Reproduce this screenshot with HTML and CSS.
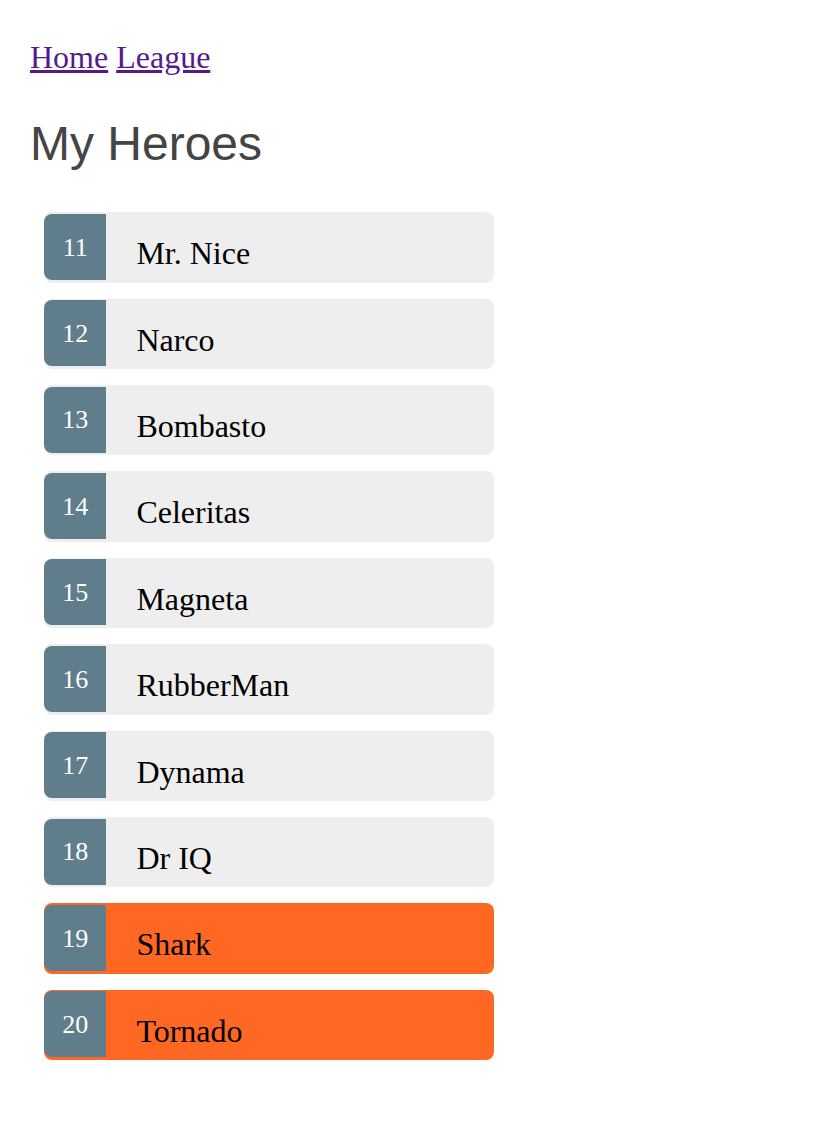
FILE: index.html
```html
<!DOCTYPE html>
<html>
<head>
<meta charset="utf-8">
<title>Tour of Heroes</title>
<link rel="stylesheet" href="styles.css">
</head>
<body>
<nav class="nav"><a class="nav-link" href="#">Home</a> <a class="nav-link" href="#">League</a></nav>
<h2 class="title">My Heroes</h2>
<ul class="heroes">
  <li class="hero"><span class="badge">11</span><span class="name">Mr. Nice</span></li>
  <li class="hero"><span class="badge">12</span><span class="name">Narco</span></li>
  <li class="hero"><span class="badge">13</span><span class="name">Bombasto</span></li>
  <li class="hero"><span class="badge">14</span><span class="name">Celeritas</span></li>
  <li class="hero"><span class="badge">15</span><span class="name">Magneta</span></li>
  <li class="hero"><span class="badge">16</span><span class="name">RubberMan</span></li>
  <li class="hero"><span class="badge">17</span><span class="name">Dynama</span></li>
  <li class="hero"><span class="badge">18</span><span class="name">Dr IQ</span></li>
  <li class="hero hero-active"><span class="badge">19</span><span class="name">Shark</span></li>
  <li class="hero hero-active"><span class="badge">20</span><span class="name">Tornado</span></li>
</ul>
</body>
</html>
```

FILE: styles.css
```css
html, body {
  margin: 0;
  padding: 0;
  background: #ffffff;
}

body {
  padding-left: 30px;
  font-family: "Liberation Serif", "Times New Roman", serif;
}

.nav {
  margin-top: 39px;
  font-size: 32px;
  line-height: 36.8px;
}

.nav-link {
  color: #551a8b;
  text-decoration: underline;
}

.title {
  margin: 40.4px 0 0 0;
  font-family: "Liberation Sans", Arial, sans-serif;
  font-size: 48px;
  font-weight: normal;
  line-height: 55.2px;
  color: #444444;
}

.heroes {
  list-style: none;
  margin: 40.8px 0 0 14px;
  padding: 0;
  width: 450px;
  display: flex;
  flex-direction: column;
  gap: 16px;
}

.hero {
  display: flex;
  align-items: flex-start;
  height: 70.4px;
  box-sizing: border-box;
  background: #eeeeee;
  border-radius: 8px;
  cursor: pointer;
}

.hero-active {
  background: #ff6822;
}

.badge {
  box-sizing: border-box;
  width: 62.4px;
  height: 66px;
  margin-top: 1.6px;
  padding-top: 20.8px;
  font-size: 26px;
  line-height: 26px;
  text-align: center;
  color: #ffffff;
  background: #607d8b;
  border-radius: 8px 0 0 8px;
}

.name {
  margin-left: 30px;
  margin-top: 23px;
  font-size: 32px;
  line-height: 36.8px;
  color: #000000;
}
```
